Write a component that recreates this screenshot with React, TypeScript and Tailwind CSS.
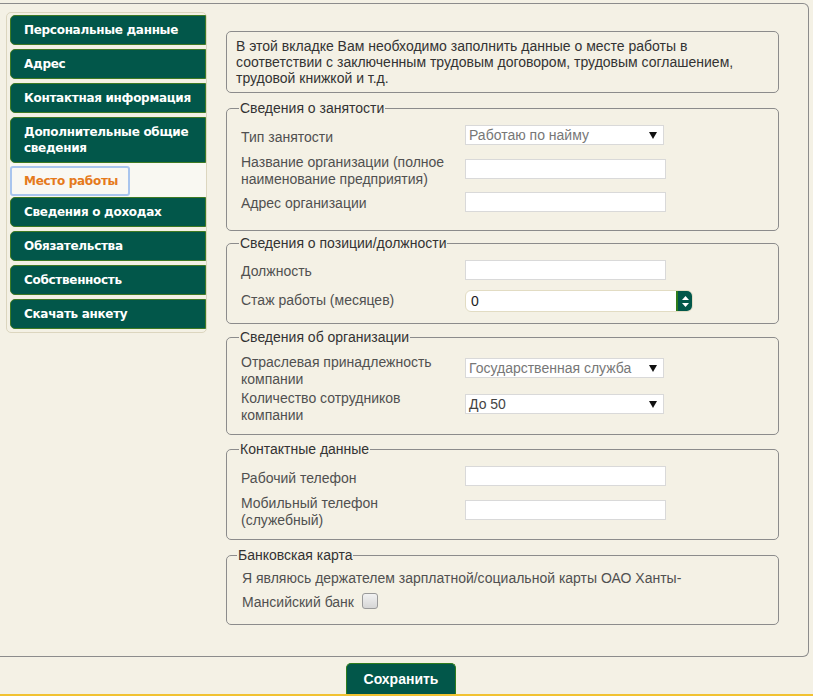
import React from 'react';

const menuTop = ['Персональные данные', 'Адрес', 'Контактная информация', 'Дополнительные общие\nсведения'];
const menuBottom = ['Сведения о доходах', 'Обязательства', 'Собственность', 'Скачать анкету'];

const MenuItem: React.FC<{ label: string; first?: boolean; flush?: boolean }> = ({ label, first, flush }) => (
  <div
    className={
      'w-full rounded-l-[5px] border border-[#3f7a24] bg-[#02574a] pl-[13px] py-[6px] text-white leading-[16px] whitespace-pre-line ' +
      (first || flush ? 'mt-0' : 'mt-[4px]')
    }
  >
    {label}
  </div>
);

const TextInput: React.FC = () => (
  <input type="text" className="h-[20px] w-[201px] border border-[#d9d9d9] bg-white outline-none" />
);

const Arrow: React.FC = () => (
  <svg width="8" height="7" viewBox="0 0 8 7" className="shrink-0">
    <polygon points="0,0 8,0 4,7" fill="#111" />
  </svg>
);

const SelectBox: React.FC<{ value: string; dark?: boolean }> = ({ value, dark }) => (
  <div className="flex h-[20px] w-[199px] items-center justify-between border border-[#d9d9d9] bg-white pl-[3px] pr-[6px]">
    <span className={dark ? 'text-[#444]' : 'text-[#777]'}>{value}</span>
    <Arrow />
  </div>
);

const SpinInput: React.FC = () => (
  <div className="flex h-[22px] w-[228px] overflow-hidden rounded-[6px] border border-[#e2dcc3] bg-white">
    <span className="flex-1 pl-[5px] leading-[20px] text-[#222]">0</span>
    <div className="flex w-[16px] flex-col items-center justify-center gap-[3px] border-l-2 border-[#2f7d1c] bg-[#02574a]">
      <svg width="7" height="4" viewBox="0 0 7 4"><polygon points="0,4 7,4 3.5,0" fill="#fff" /></svg>
      <svg width="7" height="4" viewBox="0 0 7 4"><polygon points="0,0 7,0 3.5,4" fill="#fff" /></svg>
    </div>
  </div>
);

const Legend: React.FC<{ children: React.ReactNode }> = ({ children }) => (
  <legend className="ml-[-2px] px-[1px] leading-[16px] text-[#333]">{children}</legend>
);

export default function App() {
  return (
    <div className="min-h-[696px] overflow-hidden bg-[#f4f1e5] font-['Liberation_Sans',Arial,sans-serif] text-[14px] text-[#505050]">
      <div className="mt-[3px] flex w-[809px] rounded-r-[6px] border-y border-r border-[#8c8c8c] pb-[31px]">
        {/* Sidebar */}
        <div className="ml-[6px] mt-[8px] h-fit w-[201px] rounded-[5px] border border-[#dcd6bf] pl-[3px] pt-[2px] pb-[3px] font-['DejaVu_Sans',Verdana,sans-serif] text-[12px] font-bold tracking-[-0.3px]">
          {menuTop.map((m, i) => (
            <MenuItem key={m} label={m} first={i === 0} />
          ))}
          <div className="h-[34px] bg-[#f9f8f2] pt-[3px]">
            <div className="h-[30px] w-[120px] rounded-[3px] border-2 border-[#a9c5ee] bg-[#f9f8f3] pl-[12px] leading-[26px] text-[#e57a1c]">
              Место работы
            </div>
          </div>
          {menuBottom.map((m, i) => (
            <MenuItem key={m} label={m} flush={i === 0} />
          ))}
        </div>

        {/* Content */}
        <div className="ml-[19px] mt-[27px] w-[553px]">
          <div className="rounded-[5px] border border-[#8c8c8c] px-[9px] py-[6px] leading-[16px] text-[#333]">
            В этой вкладке Вам необходимо заполнить данные о месте работы в
            <br />
            соответствии с заключенным трудовым договором, трудовым соглашением,
            <br />
            трудовой книжкой и т.д.
          </div>

          <fieldset className="mt-[7px] rounded-[5px] border border-[#8c8c8c] pl-[14px] pt-[9px] pb-[18px]">
            <Legend>Сведения о занятости</Legend>
            <div className="flex items-start">
              <div className="w-[224px] pt-[4px] leading-[17px]">Тип занятости</div>
              <SelectBox value="Работаю по найму" />
            </div>
            <div className="mt-[8px] flex items-start">
              <div className="w-[224px] leading-[17px]">
                Название организации (полное
                <br />
                наименование предприятия)
              </div>
              <div className="mt-[4px]">
                <TextInput />
              </div>
            </div>
            <div className="mt-[4px] flex items-start">
              <div className="w-[224px] pt-[3px] leading-[17px]">Адрес организации</div>
              <TextInput />
            </div>
          </fieldset>

          <fieldset className="mt-[4px] rounded-[5px] border border-[#8c8c8c] pl-[14px] pt-[9px] pb-[11px]">
            <Legend>Сведения о позиции/должности</Legend>
            <div className="flex items-start">
              <div className="w-[224px] pt-[3px] leading-[17px]">Должность</div>
              <TextInput />
            </div>
            <div className="mt-[10px] flex items-start">
              <div className="w-[224px] pt-[2px] leading-[17px]">Стаж работы (месяцев)</div>
              <SpinInput />
            </div>
          </fieldset>

          <fieldset className="mt-[5px] rounded-[5px] border border-[#8c8c8c] pl-[14px] pt-[9px] pb-[10px]">
            <Legend>Сведения об организации</Legend>
            <div className="flex items-start">
              <div className="w-[224px] leading-[17px]">
                Отраслевая принадлежность
                <br />
                компании
              </div>
              <div className="mt-[4px]">
                <SelectBox value="Государственная служба" />
              </div>
            </div>
            <div className="mt-[2px] flex items-start">
              <div className="w-[224px] leading-[17px]">
                Количество сотрудников
                <br />
                компании
              </div>
              <div className="mt-[4px]">
                <SelectBox value="До 50" dark />
              </div>
            </div>
          </fieldset>

          <fieldset className="mt-[6px] rounded-[5px] border border-[#8c8c8c] pl-[14px] pt-[9px] pb-[10px]">
            <Legend>Контактные данные</Legend>
            <div className="flex items-start">
              <div className="w-[224px] pt-[4px] leading-[17px]">Рабочий телефон</div>
              <TextInput />
            </div>
            <div className="mt-[8px] flex items-start">
              <div className="w-[224px] leading-[17px]">
                Мобильный телефон
                <br />
                (служебный)
              </div>
              <div className="mt-[4px]">
                <TextInput />
              </div>
            </div>
          </fieldset>

          <fieldset className="mt-[7px] rounded-[5px] border border-[#8c8c8c] pl-[14px] pt-[3px] pb-[10px]">
            <legend className="ml-[-4px] px-[1px] leading-[16px] text-[#333]">Банковская карта</legend>
            <div className="pl-[1px] leading-[24px]">
              Я являюсь держателем зарплатной/социальной карты ОАО Ханты-
              <br />
              Мансийский банк{' '}
              <span className="ml-[4px] inline-block h-[16px] w-[16px] rounded-[3px] border border-[#9a9a9a] bg-gradient-to-b from-[#f2f2f2] to-[#d6d6d6] align-[-2px]" />
            </div>
          </fieldset>
        </div>
      </div>

      <div className="mt-[6px] flex w-[802px] justify-center">
        <button className="h-[31px] w-[110px] rounded-t-[5px] border border-b-0 border-[#2f7d1c] bg-[#02574a] text-[14px] font-bold text-white">
          Сохранить
        </button>
      </div>
      <div className="border-t-2 border-[#f1c232]" />
    </div>
  );
}
